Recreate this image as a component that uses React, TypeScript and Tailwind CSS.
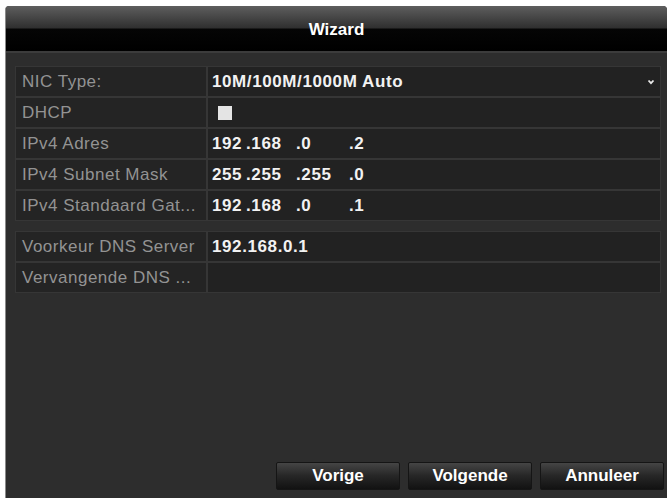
import React from "react";

type Row = { label: string; value?: React.ReactNode };

const IpValue = ({ parts }: { parts: string[] }) => {
  const widths = ["w-[34px]", "w-[50px]", "w-[53px]", "w-auto"];
  return (
    <div className="flex">
      {parts.map((p, i) => (
        <span key={i} className={widths[i] + " shrink-0"}>
          {p}
        </span>
      ))}
    </div>
  );
};

const Table = ({ rows }: { rows: Row[] }) => (
  <div className="flex flex-col gap-[2px] bg-[#363636] p-[1px]">
    {rows.map((r) => (
      <div key={r.label} className="flex gap-[2px] h-[29px]">
        <div className="w-[190px] shrink-0 bg-[#242424] pl-[6px] flex items-center text-[17px] tracking-[0.5px] text-[#939393] whitespace-nowrap overflow-hidden">
          {r.label}
        </div>
        <div className="flex-1 bg-[#222222] pl-[4px] pr-[5px] flex items-center text-[17px] tracking-[0.6px] font-bold text-[#f2f2f2]">
          {r.value}
        </div>
      </div>
    ))}
  </div>
);

export default function App() {
  const network: Row[] = [
    {
      label: "NIC Type:",
      value: (
        <div className="flex w-full items-center justify-between">
          <span>10M/100M/1000M Auto</span>
          <svg width="8" height="6" viewBox="0 0 8 6">
            <path d="M1.5 1.5 L4 4.2 L6.5 1.5" stroke="#e8e8e8" strokeWidth="1.8" fill="none" />
          </svg>
        </div>
      ),
    },
    { label: "DHCP", value: <div className="ml-[6px] w-[14px] h-[14px] bg-[#e4e4e4]" /> },
    { label: "IPv4 Adres", value: <IpValue parts={["192", ".168", ".0", ".2"]} /> },
    { label: "IPv4 Subnet Mask", value: <IpValue parts={["255", ".255", ".255", ".0"]} /> },
    { label: "IPv4 Standaard Gat...", value: <IpValue parts={["192", ".168", ".0", ".1"]} /> },
  ];
  const dns: Row[] = [
    { label: "Voorkeur DNS Server", value: "192.168.0.1" },
    { label: "Vervangende DNS ...", value: "" },
  ];

  return (
    <div className="w-[670px] h-[498px] bg-white pl-[5px] pr-[3px] pt-[6px] font-['Liberation_Sans',Arial,sans-serif]">
      <div className="h-full flex flex-col bg-[#2d2d2d] rounded-t-[4px] overflow-hidden border-l border-[#8a8a8a]">
        <div className="h-[45px] shrink-0 flex items-center justify-center bg-[linear-gradient(to_bottom,#5e5e5e_0%,#303030_48%,#050505_52%,#000000_100%)] text-white font-bold text-[17px] pt-[2px]">
          Wizard
        </div>
        <div className="h-[2px] bg-[#3c3c3c]" />
        <div className="flex flex-col pl-[9px] pr-[6px] pt-[13px]">
          <Table rows={network} />
          <div className="h-[10px]" />
          <Table rows={dns} />
        </div>
        <div className="flex-1" />
        <div className="flex justify-end gap-[8px] pr-[3px] pb-[8px]">
          {["Vorige", "Volgende", "Annuleer"].map((b) => (
            <button
              key={b}
              className="w-[124px] h-[28px] rounded-[2px] border border-[#151515] bg-[linear-gradient(to_bottom,#454545_0%,#262626_50%,#121212_100%)] text-white font-bold text-[17px] flex items-center justify-center"
            >
              {b}
            </button>
          ))}
        </div>
      </div>
    </div>
  );
}
